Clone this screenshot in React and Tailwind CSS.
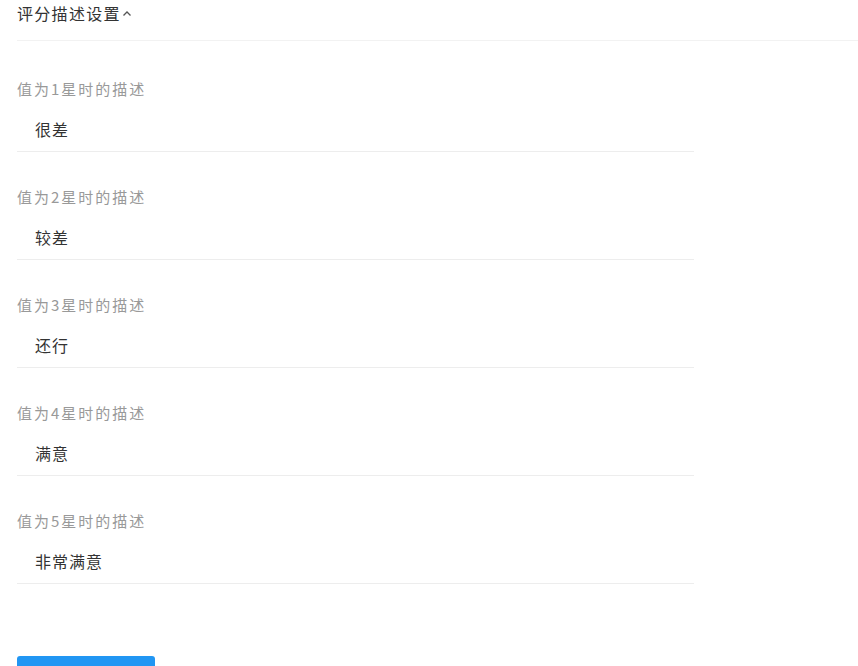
import React from 'react';

const rows = [
  { label: '值为1星时的描述', value: '很差' },
  { label: '值为2星时的描述', value: '较差' },
  { label: '值为3星时的描述', value: '还行' },
  { label: '值为4星时的描述', value: '满意' },
  { label: '值为5星时的描述', value: '非常满意' },
];

const font = { fontFamily: '"Noto Sans CJK SC", "Noto Sans", sans-serif' };

const App = () => {
  return (
    <div className="w-[858px] h-[666px] overflow-hidden bg-white pl-[17px]" style={font}>
      <div className="h-[41px] border-b border-[#f2f2f2] flex items-start pt-[3px]">
        <span className="text-[16px] leading-[20px] tracking-[1.3px] text-[#333]">评分描述设置</span>
        <svg width="10" height="7" viewBox="0 0 10 7" className="mt-[7px] ml-[1px]">
          <path d="M1.5 5.5 L5 2 L8.5 5.5" fill="none" stroke="#555" strokeWidth="1.3" />
        </svg>
      </div>

      <div className="w-[677px] pt-[3px]">
        {rows.map((row) => (
          <div key={row.label} className="pt-[35px]">
            <div className="text-[15px] leading-[20px] tracking-[2px] text-[#999]">{row.label}</div>
            <div className="mt-[8px] h-[45px] border-b border-[#ededed] flex items-center pl-[18px]">
              <span className="text-[16px] leading-[20px] tracking-[1px] text-[#333]">{row.value}</span>
            </div>
          </div>
        ))}
      </div>

      <div className="mt-[72px] w-[138px] h-[36px] rounded-[3px] bg-[#2196f3]" />
    </div>
  );
};

export default App;
